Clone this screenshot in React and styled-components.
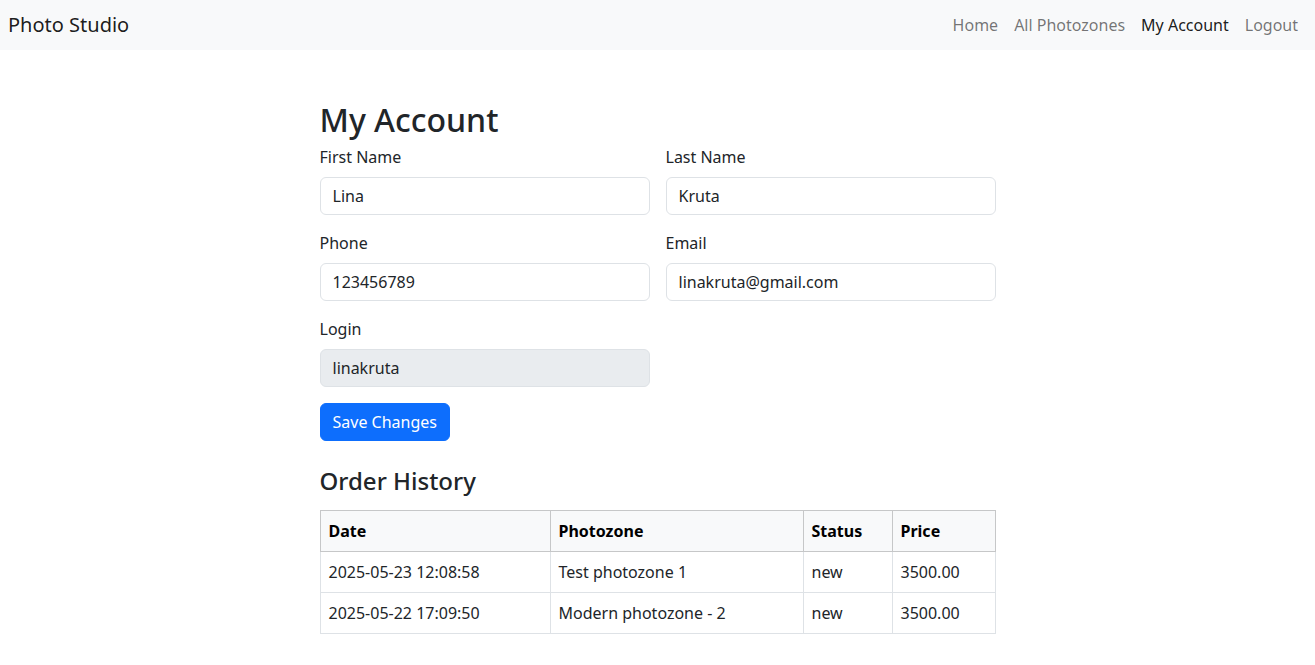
import styled, { createGlobalStyle } from "styled-components"
import { useState } from "react"

const GlobalStyle = createGlobalStyle`
  * { box-sizing: border-box; }
  body {
    margin: 0;
    font-family: "Noto Sans", "Liberation Sans", sans-serif;
    font-size: 16px;
    line-height: 1.5;
    color: #212529;
    background: #fff;
  }
`

const orders = [
    { date: "2025-05-23 12:08:58", photozone: "Test photozone 1", status: "new", price: "3500.00" },
    { date: "2025-05-22 17:09:50", photozone: "Modern photozone - 2", status: "new", price: "3500.00" },
]

export default function App() {
    const [form, setForm] = useState({
        firstName: "Lina",
        lastName: "Kruta",
        phone: "123456789",
        email: "linakruta@gmail.com",
    })

    function update(field) {
        return e => setForm({ ...form, [field]: e.target.value })
    }

    function handleSubmit(event) {
        event.preventDefault()
    }

    return (
        <>
            <GlobalStyle />
            <Navbar>
                <Brand href="#">Photo Studio</Brand>
                <NavLinks>
                    <NavLink href="#">Home</NavLink>
                    <NavLink href="#">All Photozones</NavLink>
                    <NavLink href="#" $active>My Account</NavLink>
                    <NavLink href="#">Logout</NavLink>
                </NavLinks>
            </Navbar>

            <Main>
                <Title>My Account</Title>
                <Form onSubmit={handleSubmit}>
                    <Field>
                        <Label>First Name</Label>
                        <Input value={form.firstName} onChange={update("firstName")} />
                    </Field>
                    <Field>
                        <Label>Last Name</Label>
                        <Input value={form.lastName} onChange={update("lastName")} />
                    </Field>
                    <Field>
                        <Label>Phone</Label>
                        <Input value={form.phone} onChange={update("phone")} />
                    </Field>
                    <Field>
                        <Label>Email</Label>
                        <Input value={form.email} onChange={update("email")} />
                    </Field>
                    <Field>
                        <Label>Login</Label>
                        <Input value="linakruta" disabled />
                    </Field>
                    <Actions>
                        <SaveButton type="submit">Save Changes</SaveButton>
                    </Actions>
                </Form>

                <SubTitle>Order History</SubTitle>
                <Table>
                    <thead>
                        <tr>
                            <Th style={{ width: 230 }}>Date</Th>
                            <Th style={{ width: 253 }}>Photozone</Th>
                            <Th style={{ width: 89 }}>Status</Th>
                            <Th>Price</Th>
                        </tr>
                    </thead>
                    <tbody>
                        {orders.map(o => (
                            <tr key={o.date}>
                                <Td>{o.date}</Td>
                                <Td>{o.photozone}</Td>
                                <Td>{o.status}</Td>
                                <Td>{o.price}</Td>
                            </tr>
                        ))}
                    </tbody>
                </Table>
            </Main>
        </>
    )
}

const Navbar = styled.nav`
    height: 50px;
    background-color: #f8f9fa;
    display: flex;
    align-items: center;
    justify-content: space-between;
    padding: 0 9px 0 8px;
`

const Brand = styled.a`
    font-size: 20px;
    color: rgba(0, 0, 0, 0.9);
    text-decoration: none;
`

const NavLinks = styled.div`
    display: flex;
`

const NavLink = styled.a`
    padding: 8px;
    font-size: 16px;
    text-decoration: none;
    color: ${p => p.$active ? "rgba(0, 0, 0, 0.9)" : "rgba(0, 0, 0, 0.55)"};
`

const Main = styled.main`
    max-width: 700px;
    margin: 0 auto;
    padding: 49px 12px 0;
`

const Title = styled.h2`
    font-size: 32px;
    font-weight: 500;
    line-height: 1.2;
    margin: 2px 0 6px;
`

const Form = styled.form`
    display: grid;
    grid-template-columns: 1fr 1fr;
    column-gap: 16px;
    row-gap: 16px;
`

const Field = styled.div`
    display: flex;
    flex-direction: column;
`

const Label = styled.label`
    margin-bottom: 8px;
`

const Input = styled.input`
    height: 38px;
    padding: 6px 12px;
    font: inherit;
    color: #212529;
    background-color: ${p => p.disabled ? "#e9ecef" : "#fff"};
    border: 1px solid #dee2e6;
    border-radius: 6px;
    outline: none;
`

const Actions = styled.div`
    grid-column: 1 / -1;
`

const SaveButton = styled.button`
    height: 38px;
    padding: 6px 12px;
    font: inherit;
    color: #fff;
    background-color: #0d6efd;
    border: 1px solid #0d6efd;
    border-radius: 6px;
    cursor: pointer;
`

const SubTitle = styled.h4`
    font-size: 24px;
    font-weight: 500;
    line-height: 1.2;
    margin: 26px 0 14px;
`

const Table = styled.table`
    width: 100%;
    border-collapse: collapse;
    border: 1px solid #dee2e6;
`

const Th = styled.th`
    text-align: left;
    font-weight: 700;
    color: #000;
    background-color: #f8f9fa;
    padding: 8px;
    height: 41px;
    border: 1px solid #c6c7c8;
`

const Td = styled.td`
    padding: 8px;
    height: 41px;
    border: 1px solid #dee2e6;
`
